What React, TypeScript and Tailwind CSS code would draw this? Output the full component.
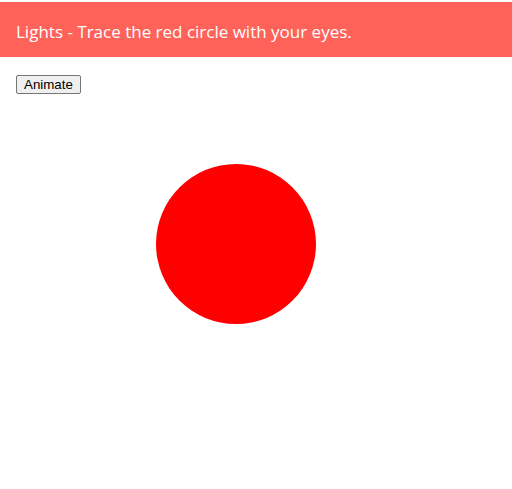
import React from 'react';

const App: React.FC = () => {
  return (
    <div className="min-h-screen bg-white">
      <div className="pt-[2px]">
        <header className="h-[55px] bg-[#ff6259] px-4 pt-1 flex items-center">
          <h1 className="text-[17px] text-white font-['Open_Sans',sans-serif]">
            Lights - Trace the red circle with your eyes.
          </h1>
        </header>
      </div>
      <div className="px-4 pt-[18px]">
        <button className="block h-[19px] px-[7px] border border-[#767676] rounded-[2px] bg-[#efefef] text-[13.33px] leading-none text-black font-['Liberation_Sans',Arial,sans-serif]">
          Animate
        </button>
        <div className="ml-[140px] mt-[70px] w-[160px] h-[160px] rounded-full bg-[#ff0000]" />
      </div>
    </div>
  );
};

export default App;
